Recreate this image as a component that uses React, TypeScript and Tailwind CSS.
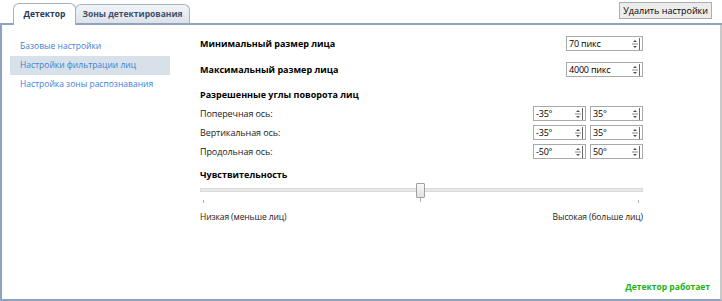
import React from "react";

const FONT = { fontFamily: '"Open Sans", "Noto Sans", sans-serif' };

function Arrows() {
  return (
    <svg width="9" height="12" viewBox="0 0 9 12" className="mr-[2px] shrink-0">
      <path d="M2 4 L4 2 L6 4 Z" fill="#505050" />
      <line x1="1" y1="6" x2="7" y2="6" stroke="#8a8a8a" strokeWidth="1" />
      <path d="M2 8 L4 10 L6 8 Z" fill="#505050" />
      <line x1="8.5" y1="0" x2="8.5" y2="12" stroke="#6a6a6a" strokeWidth="1" />
    </svg>
  );
}

function Spinner({ value, width }: { value: string; width: string }) {
  return (
    <div
      className={`flex h-[15px] items-center border border-[#a9a9a9] bg-white ${width}`}
    >
      <span className="flex-1 pl-[2px] text-[9px] leading-none tracking-[-0.2px] text-black">
        {value}
      </span>
      <Arrows />
    </div>
  );
}

function AngleRow({ label, from, to }: { label: string; from: string; to: string }) {
  return (
    <div className="flex h-[19px] items-center">
      <span className="flex-1 text-[9px] tracking-[-0.1px] text-[#1a1a1a]">{label}</span>
      <div className="flex gap-[4px]">
        <Spinner value={from} width="w-[53px]" />
        <Spinner value={to} width="w-[53px]" />
      </div>
    </div>
  );
}

export default function App() {
  const navItems = [
    "Базовые настройки",
    "Настройки фильтрации лиц",
    "Настройка зоны распознавания",
  ];

  return (
    <div className="flex h-[301px] w-[722px] flex-col bg-white" style={FONT}>
      {/* TABS */}
      <div className="flex h-[25px] items-end justify-between border-b-2 border-[#8ea2c4] pl-[13px] pr-[10px]">
        <div className="flex items-end">
          <div className="relative z-10 -mb-[2px] flex h-[22px] w-[63px] items-center justify-center whitespace-nowrap rounded-t-[6px] border border-b-0 border-[#a5b3c8] bg-white text-[8.5px] font-bold text-[#253a5e]">
            Детектор
          </div>
          <div className="-ml-[1px] flex h-[19px] w-[115px] items-center justify-center whitespace-nowrap rounded-t-[6px] border border-b-0 border-[#a5b3c8] bg-gradient-to-b from-[#f2f4f7] to-[#dde2ea] text-[8.5px] font-bold text-[#3f4f6a]">
            Зоны детектирования
          </div>
        </div>
        <div className="mb-[4px] flex h-[17px] items-center whitespace-nowrap border border-[#adadad] bg-[#ececec] px-[3px] text-[9px] text-black">
          Удалить настройки
        </div>
      </div>

      {/* BODY */}
      <div className="flex flex-1 border-b-2 border-l-2 border-r-2 border-[#8ea2c4] border-r-[#c9c9c9]">
        {/* LEFT NAV */}
        <div className="w-[168px] shrink-0 pl-[8px] pt-[12px]">
          {navItems.map((item, i) => (
            <div
              key={item}
              className={`flex h-[19px] items-center whitespace-nowrap pl-[10px] text-[8.5px] text-[#3c7fd6] ${
                i === 1 ? "bg-[#d8e1ea]" : ""
              }`}
            >
              {item}
            </div>
          ))}
        </div>

        {/* SETTINGS */}
        <div className="flex flex-1 flex-col pl-[30px] pt-[9px]">
          <div className="flex w-[443px] flex-col">
            <div className="flex h-[19px] items-center justify-between">
              <span className="text-[9px] font-bold text-black">
                Минимальный размер лица
              </span>
              <Spinner value="70 пикс" width="w-[77px]" />
            </div>
            <div className="mt-[7px] flex h-[19px] items-center justify-between">
              <span className="text-[9px] font-bold text-black">
                Максимальный размер лица
              </span>
              <Spinner value="4000 пикс" width="w-[77px]" />
            </div>

            <div className="mt-[7px] flex h-[18px] items-center text-[9px] font-bold text-black">
              Разрешенные углы поворота лиц
            </div>
            <AngleRow label="Поперечная ось:" from="-35°" to="35°" />
            <AngleRow label="Вертикальная ось:" from="-35°" to="35°" />
            <AngleRow label="Продольная ось:" from="-50°" to="50°" />

            <div className="mt-[5px] flex h-[18px] items-center text-[9px] font-bold text-black">
              Чувствительность
            </div>

            {/* SLIDER */}
            <div className="relative mt-[-1px] h-[24px]">
              <div className="absolute left-0 right-0 top-[5px] h-[4px] border border-[#dadada] bg-[#e8e8e8]" />
              <div className="absolute left-[216px] top-0 h-[15px] w-[9px] rounded-[1px] border border-[#a0a0a0] bg-gradient-to-b from-[#f8f8f8] to-[#e2e2e2]" />
              <div className="absolute left-[3px] top-[17px] h-[3px] w-[1px] bg-[#b0b0b0]" />
              <div className="absolute left-[220px] top-[15px] h-[4px] w-[1px] bg-[#b0b0b0]" />
              <div className="absolute right-[4px] top-[17px] h-[3px] w-[1px] bg-[#b0b0b0]" />
            </div>

            <div className="mt-[4px] flex justify-between text-[8.5px] tracking-[-0.1px] text-[#1a1a1a]">
              <span>Низкая (меньше лиц)</span>
              <span>Высокая (больше лиц)</span>
            </div>
          </div>

          <div className="mt-auto mb-[5px] mr-[10px] self-end whitespace-nowrap text-[8.5px] font-bold text-[#17b317]">
            Детектор работает
          </div>
        </div>
      </div>
    </div>
  );
}
